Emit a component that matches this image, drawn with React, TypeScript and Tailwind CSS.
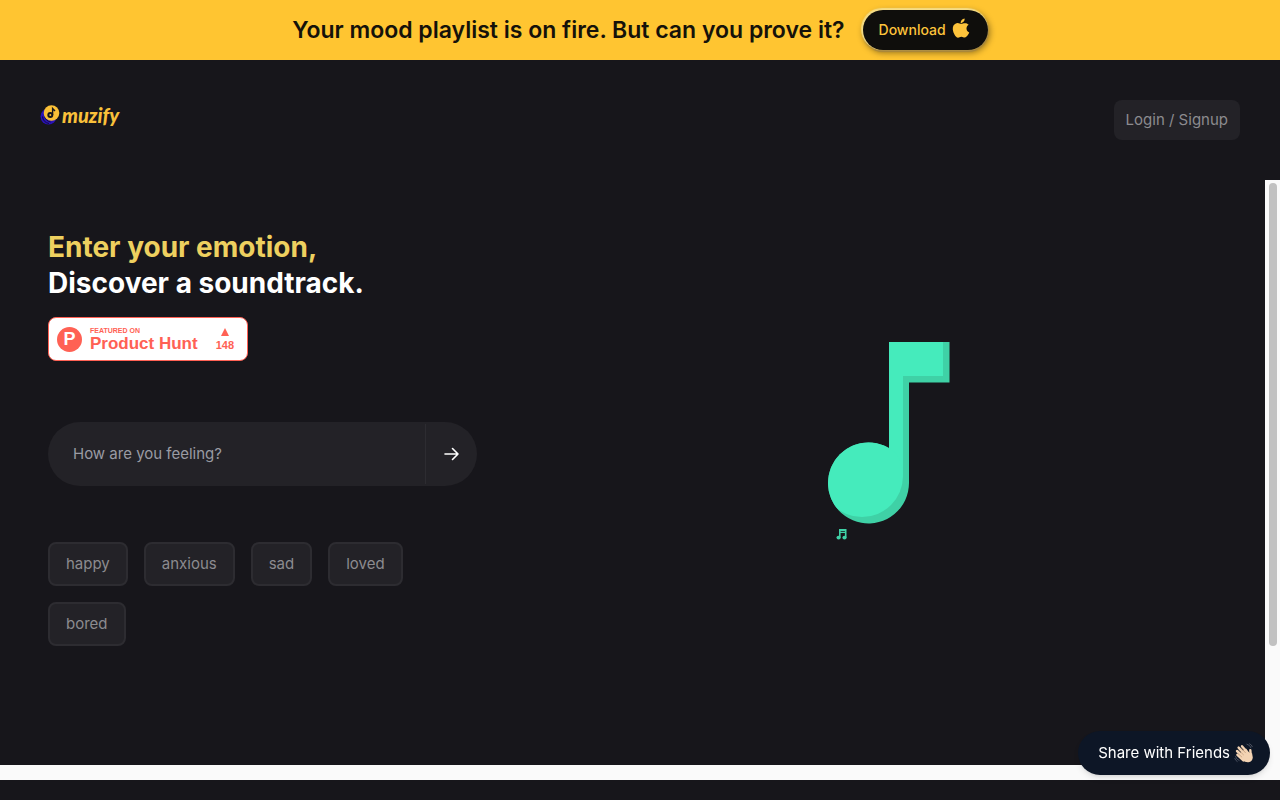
import React, { useState } from 'react';
import { IoLogoApple } from 'react-icons/io5';

const MOODS = ['happy', 'anxious', 'sad', 'loved', 'bored'];

function Banner() {
  return (
    <div className="flex h-[60px] items-center justify-center gap-[18px] bg-[#ffc531] px-4">
      <p className="text-[23px] leading-8 font-semibold text-[#15120a]">
        Your mood playlist is on fire. But can you prove it?
      </p>
      <button className="flex h-10 items-center gap-1 rounded-full bg-[#0f0e0c] px-4 text-sm font-medium text-[#fdc33b] shadow-[-1px_-1px_1px_1px_#f5dc85,0_1px_1px_1px_#a8873c,1px_2px_6px_1px_rgba(0,0,0,0.4)]">
        <span>Download</span>
        <IoLogoApple className="mb-1 h-[22px] w-[22px]" />
      </button>
    </div>
  );
}

function Logo() {
  return (
    <a href="#" aria-label="muzify" className="flex h-[30px] items-center gap-0.5 text-[#f9c03a]">
      <svg viewBox="0 0 20 22" className="h-[22px] w-5" aria-hidden="true">
        <circle cx="8.500" cy="12.500" r="8" fill="#2a12b8" />
        <path d="M2.500 12.500a8 8 0 0 0 6.500 7M4.500 11.500a8 8 0 0 0 6 6.500" stroke="#100b3c" strokeWidth="1" fill="none" />
        <circle cx="11.500" cy="9" r="7.800" fill="#fbc037" />
        <circle cx="10.300" cy="11" r="3" fill="#18171c" />
        <circle cx="10.300" cy="11" r="1" fill="#fbc037" />
        <path d="M12.600 11V4.500l2.400 2.500" stroke="#18171c" strokeWidth="1.400" fill="none" />
      </svg>
      <span className="font-['Lato',sans-serif] text-xl leading-none font-black italic">muzify</span>
    </a>
  );
}

function Header() {
  return (
    <header className="flex h-[120px] items-start justify-between p-10">
      <Logo />
      <button className="h-10 rounded-lg bg-[#232227] px-3 text-[15px] text-[#8c8b8f]">
        Login / Signup
      </button>
    </header>
  );
}

function ProductHuntBadge() {
  return (
    <a
      href="#"
      className="mt-4 flex h-11 w-[200px] items-center rounded-lg border border-[#ff6154] bg-white pr-[13px] pl-2 font-['Liberation_Sans',Arial,sans-serif] font-bold text-[#ff6154]"
    >
      <span className="flex h-[25px] w-[25px] items-center justify-center rounded-full bg-[#ff6154] text-lg leading-none text-white">
        P
      </span>
      <span className="ml-2 flex flex-col">
        <span className="text-[7px] leading-[8px]">FEATURED ON</span>
        <span className="text-[17px] leading-[17px]">Product Hunt</span>
      </span>
      <span className="ml-auto flex flex-col items-center gap-1">
        <svg viewBox="0 0 8 8" className="h-2 w-2" fill="currentColor" aria-hidden="true">
          <path d="M4 0l4 8H0z" />
        </svg>
        <span className="text-[11px] leading-[11px]">148</span>
      </span>
    </a>
  );
}

function NoteArt() {
  return (
    <svg viewBox="1 0 240 200" className="w-60 overflow-visible" role="img" aria-label="Music note">
      <defs>
        <clipPath id="note-head">
          <circle cx="40.500" cy="141" r="40.500" />
        </clipPath>
      </defs>
      <path d="M61 0h60.500v40.500H81V141a40.500 40.500 0 1 1-20-35z" fill="#3fd1a6" />
      <path d="M61 0h54v34H75v101l-14 6z" fill="#45ebbc" />
      <circle cx="34" cy="134" r="41" fill="#45ebbc" clipPath="url(#note-head)" />
      <path d="M11 187h7.500v2.200H11zM11 187h1.600v8.500H11zM16.900 187h1.600v8.500h-1.600zM11 190h7.500v1H11z" fill="#3fd1a6" />
      <ellipse cx="10.600" cy="195.600" rx="2.100" ry="1.900" fill="#3fd1a6" />
      <ellipse cx="16.500" cy="195.600" rx="2.100" ry="1.900" fill="#3fd1a6" />
    </svg>
  );
}

function WavingHand() {
  return (
    <svg viewBox="0 0 20 20" className="h-5 w-5" aria-hidden="true">
      <path d="M1.500 13.500q.8 3 3.600 4M.8 15.500q.6 2 2.400 3M13 1.200q3 .6 4 3.600M15.600.8q2 .7 2.700 2.800" stroke="#4b5160" strokeWidth="1" fill="none" strokeLinecap="round" />
      <path d="M3.400 11.800l6 5.700M3 8l7 6.500M4.600 4.600l7 7.500M8 3.200l6.500 7.500M16.300 7.200l.5 6" stroke="#f3d3b3" strokeWidth="2.400" strokeLinecap="round" />
      <path d="M7 9l5-3.500 4 5.500 2-1 .8 4.500q-.3 4-4.300 4.700-3.500.3-6-2.200L5 13z" fill="#f3d3b3" />
      <path d="M4.300 10.800l3.500 3.200M4.800 7.200l4.700 4.600M7.200 4.800l4.300 5" stroke="#b58e6d" strokeWidth=".6" strokeLinecap="round" />
    </svg>
  );
}

function MoodSearch() {
  const [mood, setMood] = useState('');

  return (
    <div>
      <form
        onSubmit={(e) => e.preventDefault()}
        className="mt-[61px] flex h-16 overflow-hidden rounded-full bg-[#232227]"
      >
        <input
          type="text"
          aria-label="How are you feeling?"
          placeholder="How are you feeling?"
          value={mood}
          onChange={(e) => setMood(e.target.value)}
          className="min-w-0 flex-1 pl-[25px] text-[15px] text-white outline-none placeholder:text-[#9a9ba3]"
        />
        <button
          type="submit"
          aria-label="Search"
          className="my-0.5 flex w-[52px] items-center justify-center border-l border-[#2d2c31] text-white"
        >
          <svg viewBox="0 0 16 16" className="h-4 w-4" fill="none" stroke="currentColor" strokeWidth="1.600" strokeLinecap="round" strokeLinejoin="round" aria-hidden="true">
            <path d="M1 8h13M8.500 2.500L14 8l-5.500 5.500" />
          </svg>
        </button>
      </form>

      <div className="mt-14 flex flex-wrap gap-4">
        {MOODS.map((item) => (
          <button
            key={item}
            onClick={() => setMood(item)}
            className="rounded-lg border-2 border-[#2d2c31] bg-[#232227] px-4 py-2 text-[15px] leading-6 text-[#8c8b8f]"
          >
            {item}
          </button>
        ))}
      </div>
    </div>
  );
}

export default function App() {
  return (
    <div className="flex min-h-screen flex-col bg-[#17161b] pb-5 font-['Inter',sans-serif]">
      <Banner />
      <Header />

      <div className="flex flex-1 bg-[#fafafa]">
        <main className="mb-[15px] grid flex-1 grid-cols-2 content-start items-center bg-[#17161b] pt-[49px]">
          <div className="max-w-[477px] pb-2 pl-12">
            <h1 className="text-[28px] leading-9 font-bold text-white">
              <span className="block text-[#eed05f]">Enter your emotion,</span>
              Discover a soundtrack.
            </h1>
            <ProductHuntBadge />
            <MoodSearch />
          </div>
          <div className="flex justify-center">
            <NoteArt />
          </div>
        </main>
        <div className="w-[15px] px-1 pt-[3px]">
          <div className="h-[463px] w-2 rounded-full bg-[#c1c1c1]" />
        </div>
      </div>

      <button className="fixed right-2.5 bottom-[25px] flex h-11 items-center gap-1 rounded-full bg-[#0d1626] pr-4 pl-5 text-[15px] text-white shadow-md">
        <span>Share with Friends</span>
        <WavingHand />
      </button>
    </div>
  );
}
